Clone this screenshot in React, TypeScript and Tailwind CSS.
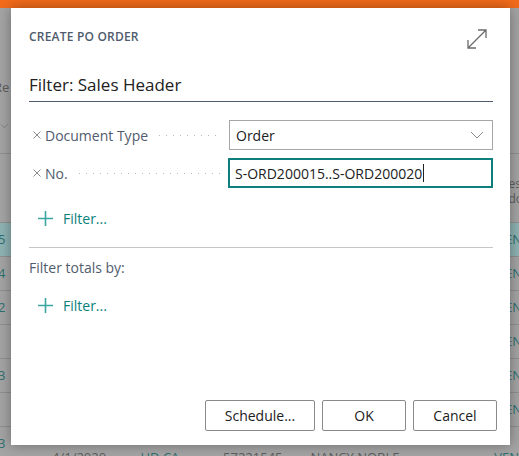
const font = { fontFamily: '"Open Sans", "Noto Sans", "Liberation Sans", sans-serif' };

const rows = [
  { left: "5", right: "EN", hl: true },
  { left: "4", right: "EN", hl: false },
  { left: "2", right: "EN", hl: false },
  { left: "", right: "EN", hl: false },
  { left: "3", right: "EN", hl: false },
  { left: "", right: "EN", hl: false },
  { left: "3", right: "", hl: false },
];

function Dots() {
  return (
    <div className="mx-2 h-[3px] flex-1 self-center bg-[radial-gradient(circle,#b9b9b9_0.8px,transparent_1px)] bg-[length:7px_3px]" />
  );
}

function Cross() {
  return (
    <svg width="8" height="8" viewBox="0 0 8 8" className="ml-[4px] mr-[4px]" aria-hidden="true">
      <path d="M0.5 0.5l7 7M7.5 0.5l-7 7" stroke="#8a8a8a" strokeWidth="1" />
    </svg>
  );
}

function FilterLink() {
  return (
    <button type="button" className="flex items-center gap-[10px] pl-[9px] text-[14px] text-[#0b7f7b]">
      <svg width="15" height="15" viewBox="0 0 15 15" aria-hidden="true">
        <path d="M7.5 0v15M0 7.5h15" stroke="#3aa6a2" strokeWidth="1.6" />
      </svg>
      <span>Filter...</span>
    </button>
  );
}

export default function App() {
  return (
    <div className="relative h-[456px] w-[519px] overflow-hidden bg-[#a4a4a4]" style={font}>
      {/* page behind the dialog */}
      <div className="h-[8px] bg-[#f26b1b]" />
      <div className="flex h-[145px] flex-col pt-[70px] text-[13px] text-[#5d5d5d]">
        <span className="-ml-[6px]">Re</span>
        <span className="mt-[18px] text-[11px] text-[#7a7a7a]">⌵</span>
      </div>
      <div className="flex h-[69px] items-start justify-end border-t border-[#8f8f8f] pt-[22px]">
        <span className="-mr-[4px] text-[12px] leading-[15px] text-[#5d5d5d]">
          es
          <br />
          do
        </span>
      </div>
      <div className="flex flex-col">
        {rows.map((r, i) => (
          <div
            key={i}
            className={`flex h-[34px] items-center justify-between border-t border-[#8f8f8f] text-[13px] text-[#2f6f6f] ${
              r.hl ? "bg-[#8eb2b2]" : ""
            }`}
          >
            <span className="-ml-[2px]">{r.left}</span>
            <span className="-mr-[3px]">{r.right}</span>
          </div>
        ))}
      </div>
      <div className="absolute bottom-[-14px] left-0 flex h-[24px] w-full items-center text-[13px] text-[#5d5d5d]">
        <span className="ml-[52px] w-[91px]">4/1/2020</span>
        <span className="w-[85px] text-[#2f6f6f]">HD.CA</span>
        <span className="w-[90px]">57221545</span>
        <span className="w-[189px]">NANCY NOBLE</span>
        <span className="text-[#2f6f6f]">VEN</span>
      </div>

      {/* dialog */}
      <div className="absolute left-[11px] top-[8px] flex h-[437px] w-[499px] flex-col bg-white pl-[18px] pr-[17px] shadow-[0_0_12px_rgba(0,0,0,0.35)]">
        <div className="flex items-center justify-between pt-[16px]">
          <span className="text-[12px] font-semibold tracking-[0.2px] text-[#505c6d]">CREATE PO ORDER</span>
          <svg width="22" height="22" viewBox="0 0 22 22" className="mr-[5px] mt-[4px]" aria-hidden="true">
            <path d="M2 20L20 2M12 2h8v8M2 12v8h8" fill="none" stroke="#6b6b6b" strokeWidth="1.3" />
          </svg>
        </div>
        <div className="mt-[24px] border-b border-[#505c6d] pb-[5px] text-[17px] font-medium leading-[22px] text-[#212121]">
          Filter: Sales Header
        </div>

        <div className="mt-[18px] flex h-[30px] items-stretch">
          <div className="flex w-[200px] items-center text-[14px] text-[#505c6d]">
            <Cross />
            <span>Document Type</span>
            <Dots />
          </div>
          <div className="flex flex-1 items-center justify-between border border-[#a6a6a6] px-[6px] text-[14px] text-[#212121]">
            <span>Order</span>
            <svg width="14" height="8" viewBox="0 0 14 8" className="mr-[2px]" aria-hidden="true">
              <path d="M1 1l6 6 6-6" fill="none" stroke="#8a8a8a" strokeWidth="1" />
            </svg>
          </div>
        </div>

        <div className="mt-[8px] flex h-[30px] items-stretch">
          <div className="flex w-[199px] items-center text-[14px] text-[#505c6d]">
            <Cross />
            <span>No.</span>
            <Dots />
          </div>
          <div className="flex flex-1 items-center border-2 border-[#0e7f7c] px-[5px] text-[14px] text-[#212121]">
            <span>S-ORD200015..S-ORD200020</span>
            <span className="ml-[1px] h-[18px] w-px bg-[#212121]" />
          </div>
        </div>

        <div className="mt-[20px]">
          <FilterLink />
        </div>

        <div className="mt-[18px] border-b border-[#c6c6c6]" />

        <div className="mt-[9px] text-[14px] text-[#505c6d]">Filter totals by:</div>

        <div className="mt-[17px]">
          <FilterLink />
        </div>

        <div className="mt-auto mb-[14px] flex justify-end gap-[7px]">
          <button type="button" className="h-[31px] w-[110px] rounded-[2px] border border-[#8a8a8a] text-[14px] text-[#212121]">
            Schedule...
          </button>
          <button type="button" className="h-[31px] w-[84px] rounded-[2px] border border-[#8a8a8a] text-[14px] text-[#212121]">
            OK
          </button>
          <button type="button" className="-mr-[4px] h-[31px] w-[84px] rounded-[2px] border border-[#8a8a8a] text-[14px] text-[#212121]">
            Cancel
          </button>
        </div>
      </div>
    </div>
  );
}
